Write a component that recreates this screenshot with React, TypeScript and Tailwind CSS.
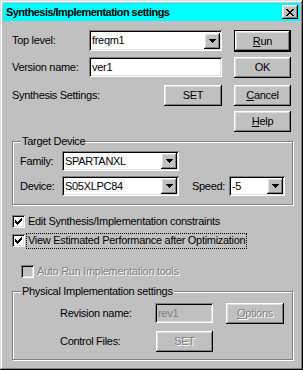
import type { ReactNode } from "react";

// win95 bevels
const raised =
  "bg-[#c0c0c0] shadow-[inset_-1px_-1px_#000,inset_1px_1px_#fff,inset_-2px_-2px_#808080,inset_2px_2px_#dfdfdf]";
const sunken =
  "shadow-[inset_1px_1px_#808080,inset_-1px_-1px_#fff,inset_2px_2px_#000,inset_-2px_-2px_#dfdfdf]";
const dim = "text-[#808080] [text-shadow:1px_1px_0_#fff]";

function Button({
  children,
  w,
  disabled,
  isDefault,
}: {
  children: ReactNode;
  w: string;
  disabled?: boolean;
  isDefault?: boolean;
}) {
  const inner = (
    <div className={`${raised} ${w} h-full flex items-center justify-center ${disabled ? dim : "text-black"}`}>
      {children}
    </div>
  );
  if (isDefault) {
    return <div className="border border-black h-[22px] flex">{inner}</div>;
  }
  return <div className="h-[21px] flex">{inner}</div>;
}

function Arrow() {
  return (
    <div className={`${raised} w-[16px] h-[16px] flex items-center justify-center shrink-0`}>
      <svg width="7" height="4" viewBox="0 0 7 4" shapeRendering="crispEdges">
        <path d="M0 0h7v1H0zM1 1h5v1H1zM2 2h3v1H2zM3 3h1v1H3z" fill="#000" />
      </svg>
    </div>
  );
}

function Combo({ value, w, h = "h-[20px]" }: { value: string; w: string; h?: string }) {
  return (
    <div className={`${sunken} bg-white ${w} ${h} flex items-center p-[2px] shrink-0`}>
      <span className="flex-1 pl-[1px] text-black leading-none">{value}</span>
      <Arrow />
    </div>
  );
}

function Field({ value, w, disabled }: { value: string; w: string; disabled?: boolean }) {
  return (
    <div
      className={`${sunken} ${disabled ? "bg-[#c0c0c0] text-[#808080]" : "bg-white text-black"} ${w} h-[20px] flex items-center px-[3px] shrink-0`}
    >
      {value}
    </div>
  );
}

function Check({ checked, disabled }: { checked?: boolean; disabled?: boolean }) {
  return (
    <div className={`${sunken} ${disabled ? "bg-[#c0c0c0]" : "bg-white"} w-[13px] h-[13px] p-[2px] shrink-0`}>
      {checked && (
        <svg width="9" height="9" viewBox="0 0 9 9" shapeRendering="crispEdges">
          <path
            d="M1 3h1v3H1zM2 4h1v3H2zM3 5h1v3H3zM4 4h1v3H4zM5 3h1v3H5zM6 2h1v3H6zM7 1h1v3H7z"
            fill="#000"
          />
        </svg>
      )}
    </div>
  );
}

function Group({ title, className, children }: { title: string; className: string; children: ReactNode }) {
  return (
    <div
      className={`relative border border-[#808080] shadow-[inset_1px_1px_#fff,1px_1px_#fff] w-[281px] ${className}`}
    >
      <span className="absolute left-[8px] top-[-8px] bg-[#c0c0c0] px-[1px] leading-[14px] text-black">
        {title}
      </span>
      {children}
    </div>
  );
}

export default function App() {
  return (
    <div
      className="w-[303px] h-[370px] bg-[#c0c0c0] p-[3px] flex flex-col text-[11px] tracking-[-0.3px] text-black shadow-[inset_-1px_-1px_#000,inset_1px_1px_#dfdfdf,inset_-2px_-2px_#808080,inset_2px_2px_#fff]"
      style={{ fontFamily: '"Liberation Sans", Arial, sans-serif' }}
    >
      <div className="h-[18px] bg-[#00ffff] flex items-center pl-[3px] pr-[2px] shrink-0">
        <span className="font-bold text-[11px] tracking-[-0.55px] flex-1">Synthesis/Implementation settings</span>
        <div className={`${raised} w-[16px] h-[14px] flex items-center justify-center`}>
          <svg width="8" height="7" viewBox="0 0 8 7" shapeRendering="crispEdges">
            <path
              d="M0 0h2v1H0zM6 0h2v1H6zM1 1h2v1H1zM5 1h2v1H5zM2 2h4v1H2zM3 3h2v1H3zM2 4h4v1H2zM1 5h2v1H1zM5 5h2v1H5zM0 6h2v1H0zM6 6h2v1H6z"
              fill="#000"
            />
          </svg>
        </div>
      </div>

      <div className="px-[9px] flex flex-col">
        <div className="mt-[9px] flex gap-[12px]">
          <div className="w-[210px] flex flex-col">
            <div className="h-[21px] flex items-center">
              <span className="w-[77px]">Top level:</span>
              <Combo value="freqm1" w="w-[133px]" h="h-[21px]" />
            </div>
            <div className="mt-[6px] h-[20px] flex items-center">
              <span className="w-[77px]">Version name:</span>
              <Field value="ver1" w="w-[133px]" />
            </div>
            <div className="mt-[8px] h-[21px] flex items-center">
              <span className="flex-1">Synthesis Settings:</span>
              <Button w="w-[58px]">SET</Button>
            </div>
          </div>
          <div className="w-[60px] flex flex-col">
            <Button w="w-full" isDefault>
              <span><u>R</u>un</span>
            </Button>
            <div className="mt-[5px]">
              <Button w="w-full">OK</Button>
            </div>
            <div className="mt-[7px]">
              <Button w="w-full">
                <span><u>C</u>ancel</span>
              </Button>
            </div>
            <div className="mt-[5px]">
              <Button w="w-full">
                <span><u>H</u>elp</span>
              </Button>
            </div>
          </div>
        </div>

        <Group title="Target Device" className="mt-[9px] h-[64px] pt-[9px] pl-[7px]">
          <div className="h-[20px] flex items-center">
            <span className="w-[42px]">Family:</span>
            <Combo value="SPARTANXL" w="w-[117px]" />
          </div>
          <div className="mt-[5px] h-[20px] flex items-center">
            <span className="w-[42px]">Device:</span>
            <Combo value="S05XLPC84" w="w-[117px]" />
            <span className="ml-[13px] w-[37px]">Speed:</span>
            <Combo value="-5" w="w-[56px]" />
          </div>
        </Group>

        <div className="mt-[8px] h-[17px] flex items-center">
          <Check checked />
          <span className="ml-[3px]">Edit Synthesis/Implementation constraints</span>
        </div>
        <div className="mt-[2px] h-[17px] flex items-center">
          <Check checked />
          <span className="ml-[1px] h-[16px] px-[1px] flex items-center border border-dotted border-black">
            View Estimated Performance after Optimization
          </span>
        </div>
        <div className="mt-[14px] h-[17px] flex items-center pl-[9px]">
          <Check disabled />
          <span className={`ml-[3px] ${dim}`}>Auto Run Implementation tools</span>
        </div>

        <Group title="Physical Implementation settings" className="mt-[11px] h-[69px] pt-[11px] pl-[47px]">
          <div className="h-[20px] flex items-center">
            <span className="w-[95px]">Revision name:</span>
            <Field value="rev1" w="w-[58px]" disabled />
            <div className="ml-[13px]">
              <Button w="w-[58px]" disabled>
                <span><u>O</u>ptions</span>
              </Button>
            </div>
          </div>
          <div className="mt-[8px] h-[20px] flex items-center">
            <span className="w-[96px]">Control Files:</span>
            <Button w="w-[57px]" disabled>SET</Button>
          </div>
        </Group>
      </div>
    </div>
  );
}
